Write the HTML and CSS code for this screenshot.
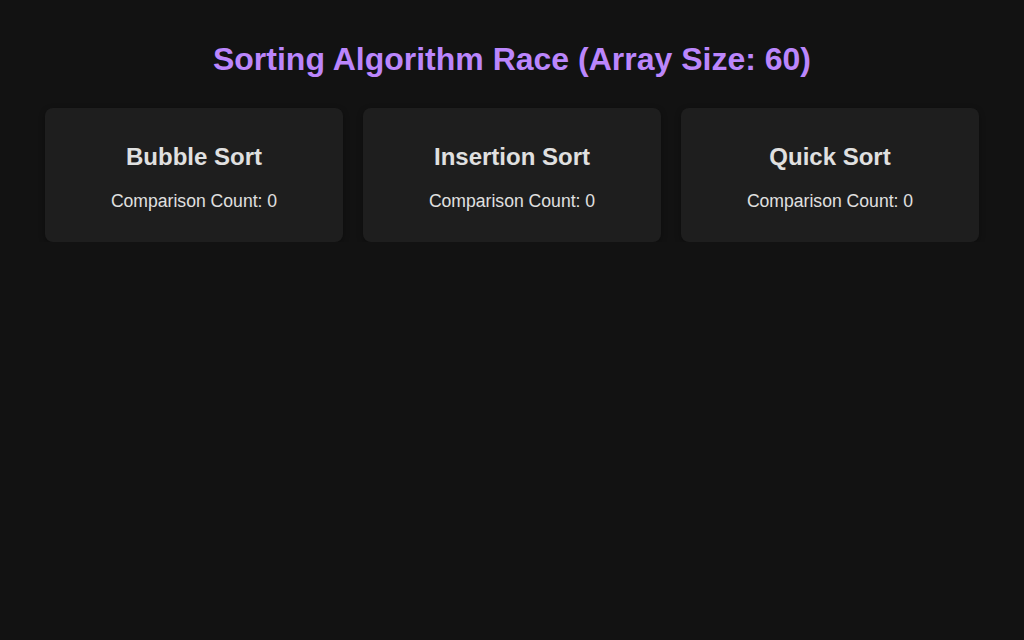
FILE: index.html
```html
<!DOCTYPE html>
<html>
<head>
<meta charset="utf-8">
<link rel="stylesheet" href="styles.css">
</head>
<body>
<h1 class="title">Sorting Algorithm Race (Array Size: 60)</h1>
<div class="race">
  <div class="card">
    <h2 class="card-title">Bubble Sort</h2>
    <p class="count">Comparison Count: 0</p>
  </div>
  <div class="card">
    <h2 class="card-title">Insertion Sort</h2>
    <p class="count">Comparison Count: 0</p>
  </div>
  <div class="card">
    <h2 class="card-title">Quick Sort</h2>
    <p class="count">Comparison Count: 0</p>
  </div>
</div>
</body>
</html>
```
FILE: styles.css
```css
html, body {
  margin: 0;
  background: #121212;
}
body {
  padding: 41px 45px 0;
  font-family: "Liberation Sans", Arial, sans-serif;
  color: #e0e0e0;
}
.title {
  margin: 0 0 30px;
  font-size: 32px;
  line-height: 37px;
  font-weight: bold;
  text-align: center;
  color: #bb86fc;
}
.race {
  display: grid;
  grid-template-columns: repeat(3, 1fr);
  gap: 20px;
}
.card {
  background: #1e1e1e;
  border-radius: 8px;
  padding: 35px 20px 31px;
  text-align: center;
  box-shadow: 0 2px 6px rgba(0,0,0,0.3);
}
.card-title {
  margin: 0 0 20px;
  font-size: 24px;
  line-height: 28px;
  font-weight: bold;
}
.count {
  margin: 0;
  font-size: 17.6px;
  line-height: 20px;
}
```
